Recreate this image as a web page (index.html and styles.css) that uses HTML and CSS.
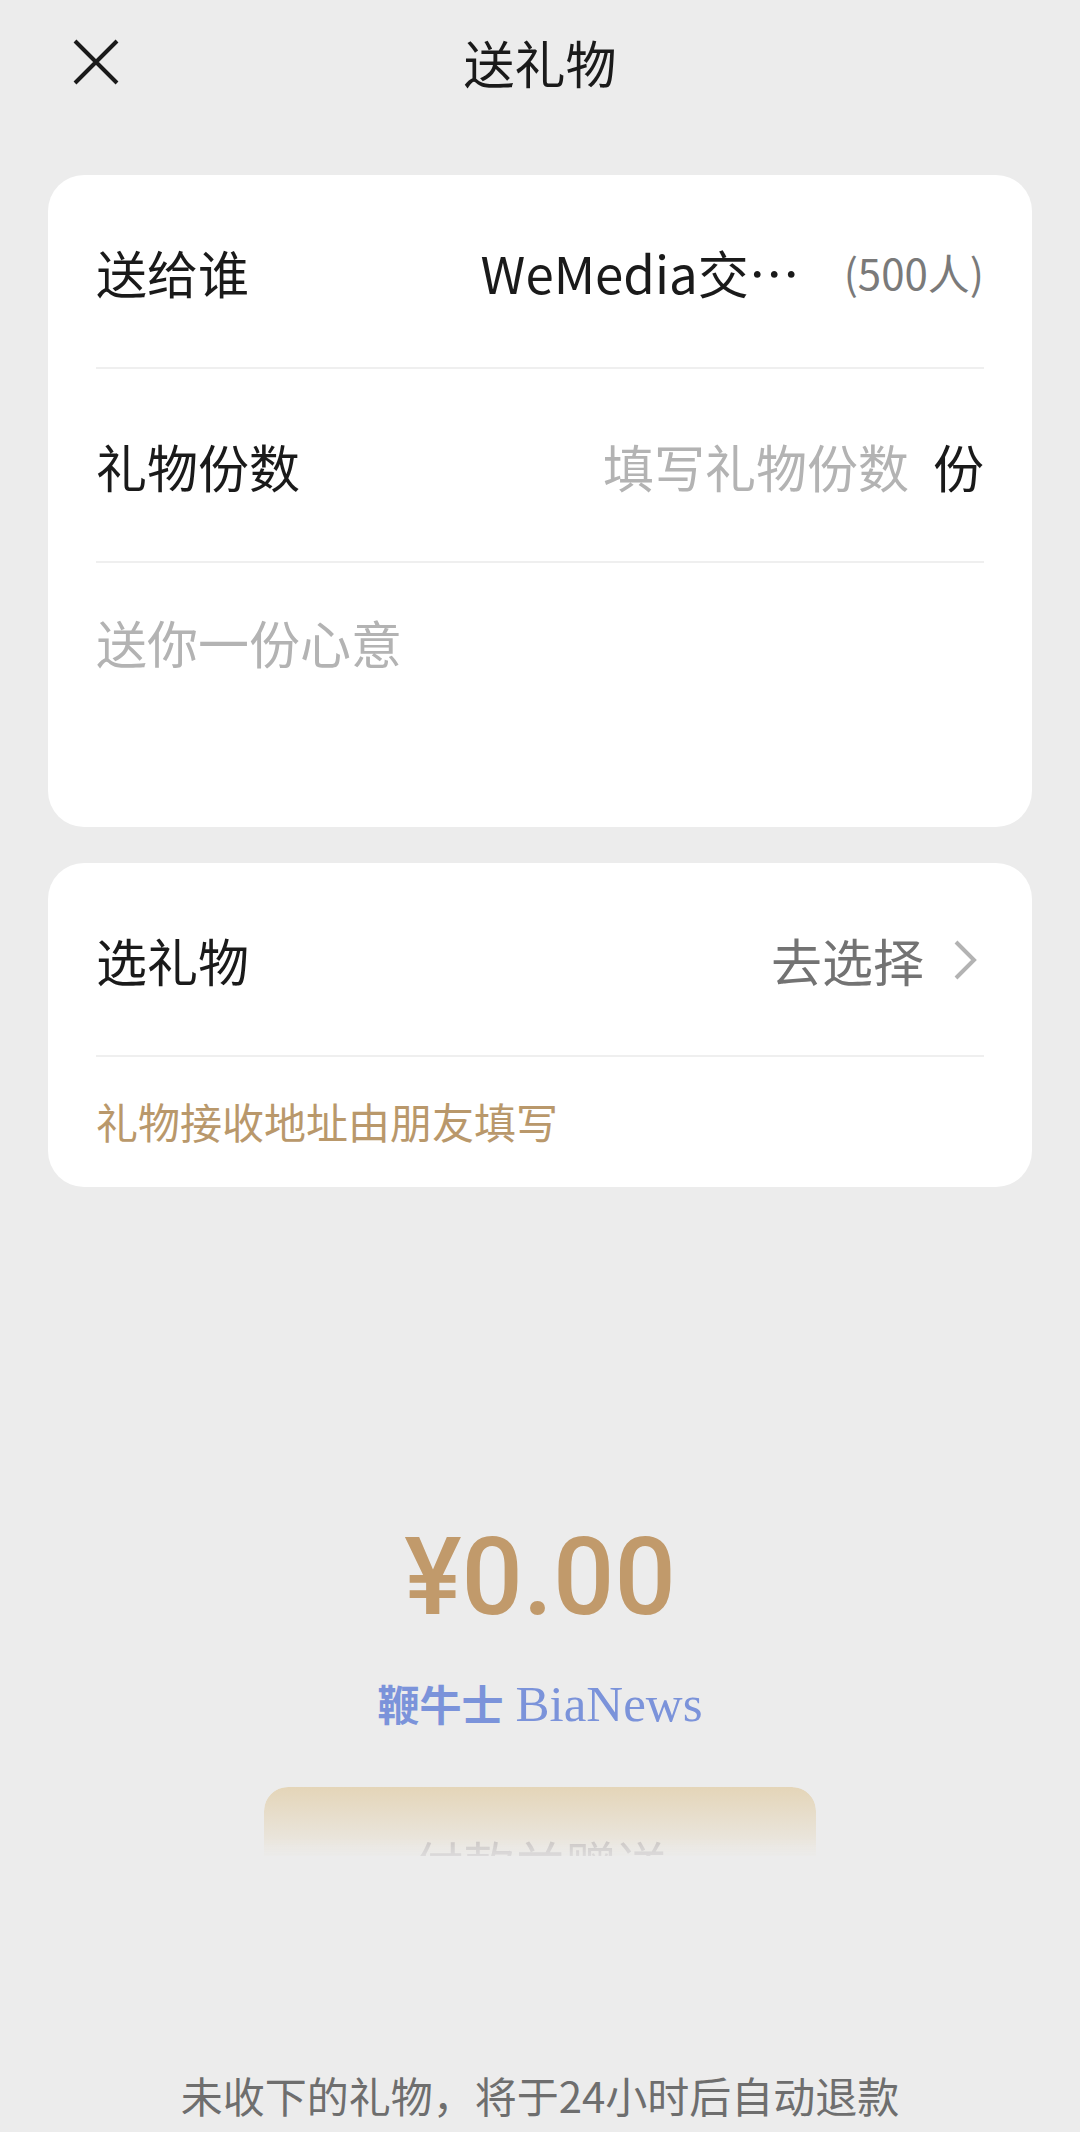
FILE: index.html
```html
<!DOCTYPE html>
<html lang="zh-CN">
<head>
<meta charset="utf-8">
<meta name="viewport" content="width=device-width, initial-scale=1">
<title>送礼物</title>
<link rel="stylesheet" href="styles.css">
</head>
<body>
<header class="topbar">
  <button class="close" type="button" aria-label="关闭">
    <svg class="close-icon" viewBox="0 0 48 48" aria-hidden="true"><path d="M3 3L45 45M45 3L3 45"/></svg>
  </button>
  <h1 class="title">送礼物</h1>
</header>
<main class="content">
  <section class="card">
    <div class="row">
      <span class="label">送给谁</span>
      <span class="recipient">WeMedia交…</span>
      <span class="members">(500人)</span>
    </div>
    <div class="row">
      <label class="label" for="count">礼物份数</label>
      <input class="count" id="count" type="text" inputmode="numeric" placeholder="填写礼物份数">
      <span class="unit">份</span>
    </div>
    <textarea class="message" rows="2" aria-label="祝福语" placeholder="送你一份心意"></textarea>
  </section>
  <section class="card">
    <div class="row">
      <span class="label">选礼物</span>
      <a class="choose" href="#choose">去选择
        <svg class="chevron" viewBox="0 0 24 42" aria-hidden="true"><path d="M2 3L20 21L2 39"/></svg>
      </a>
    </div>
    <p class="note">礼物接收地址由朋友填写</p>
  </section>
  <section class="payment">
    <p class="price">¥0.00</p>
    <p class="brand"><span class="brand-cn">鞭牛士</span><span class="brand-en">BiaNews</span></p>
    <button class="pay" type="button">付款并赠送</button>
  </section>
</main>
<footer class="refund">未收下的礼物，将于24小时后自动退款</footer>
</body>
</html>
```
FILE: styles.css
```css
* {
  box-sizing: border-box;
}

body {
  margin: 0;
  background: #ececec;
  color: #1a1a1a;
  font-family: "Noto Sans CJK SC", sans-serif;
  font-size: 51px;
  line-height: 72px;
}

button,
input,
textarea {
  margin: 0;
  padding: 0;
  border: 0;
  background: none;
  color: inherit;
  font: inherit;
}

h1,
p {
  margin: 0;
}

.topbar {
  display: grid;
  grid-template-columns: 48px 1fr 48px;
  align-items: center;
  padding: 26px 72px 0;
}

.close,
.close-icon {
  display: block;
  width: 48px;
  height: 48px;
}

.close-icon {
  fill: none;
  stroke: #1a1a1a;
  stroke-width: 4;
}

.title {
  font-size: 51px;
  font-weight: 400;
  text-align: center;
}

.content {
  display: flex;
  flex-direction: column;
  gap: 36px;
  padding: 77px 48px 0;
}

.card {
  padding: 0 48px;
  border-radius: 36px;
  background: #fff;
}

.row {
  display: flex;
  align-items: center;
  padding: 61px 0 59px;
  border-bottom: 2px solid #efefef;
}

.label {
  margin-right: auto;
}

.members {
  margin-left: 44px;
  color: #7a7a7a;
  font-size: 42px;
}

.count {
  flex: 1;
  min-width: 0;
  height: 72px;
  text-align: right;
}

.count::placeholder,
.message::placeholder {
  color: #b3b3b3;
  opacity: 1;
}

.unit {
  margin-left: 24px;
}

.message {
  display: block;
  width: 100%;
  padding: 43px 0 77px;
  resize: none;
}

.choose {
  display: flex;
  align-items: center;
  gap: 30px;
  color: #737373;
  text-decoration: none;
}

.chevron {
  width: 24px;
  height: 42px;
  margin-right: 6px;
  fill: none;
  stroke: #b3b3b3;
  stroke-width: 4;
}

.note {
  padding: 28px 0 30px;
  color: #b9986b;
  font-size: 42px;
}

.payment {
  display: flex;
  flex-direction: column;
  align-items: center;
  padding-top: 290px;
}

.price {
  color: #c19a6b;
  font-family: Roboto, sans-serif;
  font-size: 108px;
  font-weight: 500;
  line-height: 128px;
}

.brand {
  display: flex;
  align-items: baseline;
  gap: 12px;
  padding-top: 26px;
  color: #7b93da;
}

.brand-cn {
  font-family: "Noto Sans CJK SC", sans-serif;
  font-size: 42px;
  font-weight: 700;
}

.brand-en {
  font-family: "Liberation Serif", serif;
}

/* The button dissolves into the page below its upper half. */
.pay {
  width: 552px;
  max-width: 100%;
  height: 150px;
  margin-top: 47px;
  padding-top: 2px;
  border-radius: 24px;
  background: linear-gradient(#e4d5b8, #ececec 76px);
  color: rgba(110, 105, 115, 0.25);
  -webkit-mask-image: linear-gradient(#000 52px, rgba(0, 0, 0, 0.5) 69px, transparent 69px);
  mask-image: linear-gradient(#000 52px, rgba(0, 0, 0, 0.5) 69px, transparent 69px);
}

.refund {
  padding: 122px 0 0;
  color: #6e6e6e;
  font-size: 42px;
  text-align: center;
}
```
